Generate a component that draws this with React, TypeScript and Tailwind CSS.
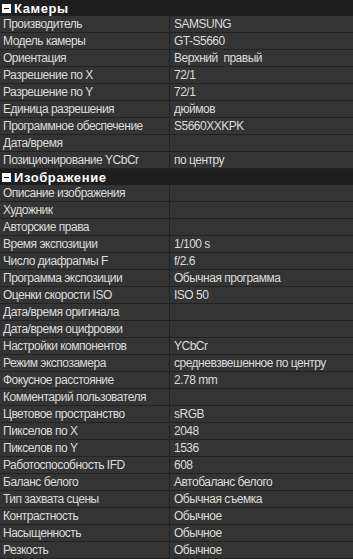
const camera: [string, string][] = [
  ["Производитель", "SAMSUNG"],
  ["Модель камеры", "GT-S5660"],
  ["Ориентация", "Верхний  правый"],
  ["Разрешение по X", "72/1"],
  ["Разрешение по Y", "72/1"],
  ["Единица разрешения", "дюймов"],
  ["Программное обеспечение", "S5660XXKPK"],
  ["Дата/время", ""],
  ["Позиционирование YCbCr", "по центру"],
];

const image: [string, string][] = [
  ["Описание изображения", ""],
  ["Художник", ""],
  ["Авторские права", ""],
  ["Время экспозиции", "1/100 s"],
  ["Число диафрагмы F", "f/2.6"],
  ["Программа экспозиции", "Обычная программа"],
  ["Оценки скорости ISO", "ISO 50"],
  ["Дата/время оригинала", ""],
  ["Дата/время оцифровки", ""],
  ["Настройки компонентов", "YCbCr"],
  ["Режим экспозамера", "средневзвешенное по центру"],
  ["Фокусное расстояние", "2.78 mm"],
  ["Комментарий пользователя", ""],
  ["Цветовое пространство", "sRGB"],
  ["Пикселов по X", "2048"],
  ["Пикселов по Y", "1536"],
  ["Работоспособность IFD", "608"],
  ["Баланс белого", "Автобаланс белого"],
  ["Тип захвата сцены", "Обычная съемка"],
  ["Контрастность", "Обычное"],
  ["Насыщенность", "Обычное"],
  ["Резкость", "Обычное"],
];

const Section = ({ title }: { title: string }) => (
  <div className="flex h-[16px] items-center bg-[#1e1e1e] pl-[2px]">
    {/* collapse box */}
    <span className="flex h-[9px] w-[9px] items-center justify-center bg-white">
      <span className="h-[1px] w-[5px] bg-black" />
    </span>
    <span className="ml-[3px] text-[13px] font-bold leading-none tracking-[0.6px] text-white">{title}</span>
  </div>
);

const Row = ({ label, value }: { label: string; value: string }) => (
  <div className="grid h-[17px] grid-cols-[170px_1fr] border-b border-[#222222] bg-[#343434] text-[12px] leading-[16px] tracking-[-0.5px] text-[#dcdcdc]">
    <div className="truncate border-r border-[#222222] pl-[3px]">{label}</div>
    <div className="truncate whitespace-pre pl-[4px]">{value}</div>
  </div>
);

export default function App() {
  return (
    <div
      className="h-[559px] w-[353px] overflow-hidden bg-[#343434]"
      style={{ fontFamily: '"Liberation Sans", Arial, sans-serif' }}
    >
      <Section title="Камеры" />
      {camera.map(([l, v]) => (
        <Row key={l} label={l} value={v} />
      ))}
      <Section title="Изображение" />
      {image.map(([l, v]) => (
        <Row key={l} label={l} value={v} />
      ))}
    </div>
  );
}
